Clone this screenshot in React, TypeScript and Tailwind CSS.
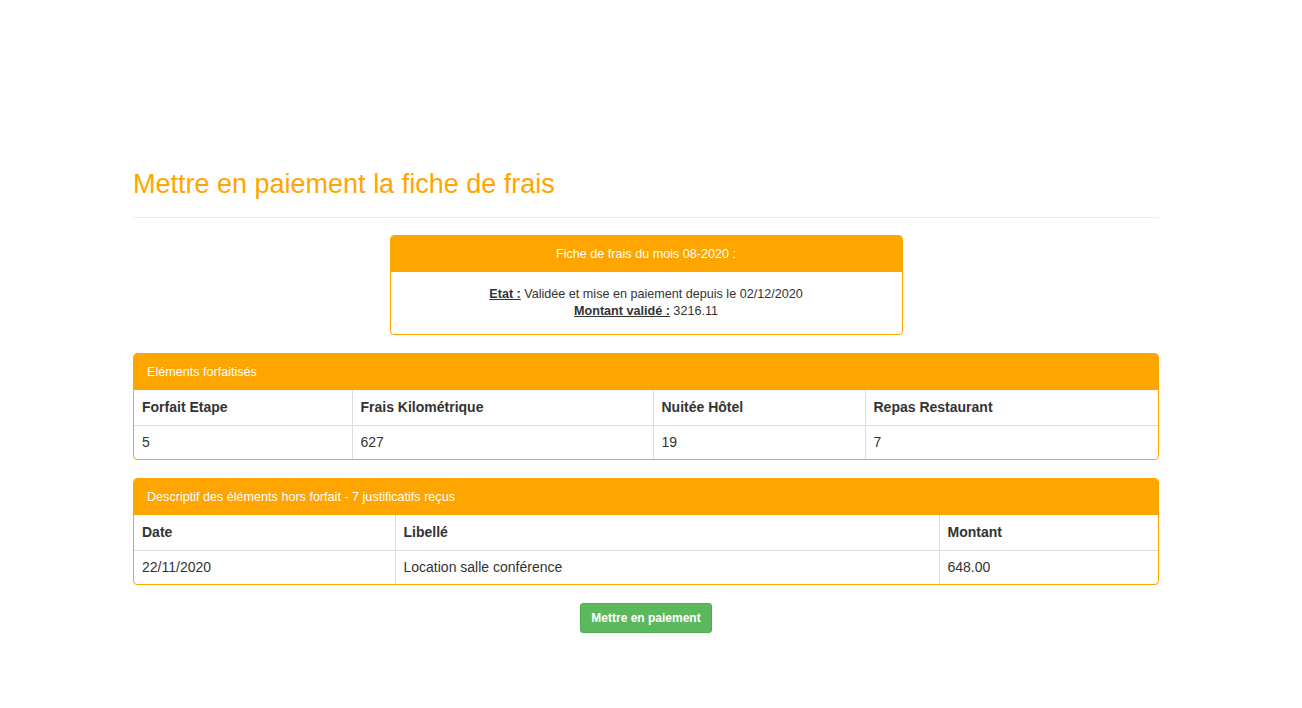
import { FC } from "react";

const Panel: FC<{ title: string; cols: { label: string; w: string }[]; row: string[] }> = ({ title, cols, row }) => {
    return (
        <div className="border border-[#ffa500] rounded-[4px] overflow-hidden mb-[18px]">
            <div className="bg-[#ffa500] text-white text-[12.6px] h-[36px] flex items-center px-[13px]">{title}</div>
            <table className="w-full border-collapse text-[14px] text-[#333]">
                <thead>
                    <tr className="h-[35px]">
                        {cols.map((c, i) => (
                            <th key={i} className={`${c.w} text-left font-bold px-[8px] border-b border-[#ddd] ${i > 0 ? "border-l" : ""}`}>{c.label}</th>
                        ))}
                    </tr>
                </thead>
                <tbody>
                    <tr className="h-[34px]">
                        {row.map((v, i) => (
                            <td key={i} className={`px-[8px] border-[#ddd] ${i > 0 ? "border-l" : ""}`}>{v}</td>
                        ))}
                    </tr>
                </tbody>
            </table>
        </div>
    );
};

export default function App() {
    return (
        <div className="min-h-[708px] bg-white font-['Liberation_Sans',Arial,sans-serif] text-[#333]">
            <div className="ml-[133px] w-[1026px] pt-[167px]">
                <h2 className="text-[27px] leading-[35px] text-[#ffa500]">Mettre en paiement la fiche de frais</h2>
                <hr className="mt-[15px] border-t border-[#eee]" />

                <div className="w-[513px] mx-auto mt-[17px] mb-[18px] border border-[#ffa500] rounded-[4px] overflow-hidden">
                    <div className="bg-[#ffa500] text-white text-[12.6px] h-[36px] flex items-center justify-center">Fiche de frais du mois 08-2020 :</div>
                    <div className="text-[12.6px] leading-[17px] text-center py-[14px]">
                        <div><span className="font-bold underline">Etat :</span> Validée et mise en paiement depuis le 02/12/2020</div>
                        <div><span className="font-bold underline">Montant validé :</span> 3216.11</div>
                    </div>
                </div>

                <Panel
                    title="Eléments forfaitisés"
                    cols={[
                        { label: "Forfait Etape", w: "w-[218px]" },
                        { label: "Frais Kilométrique", w: "w-[301px]" },
                        { label: "Nuitée Hôtel", w: "w-[212px]" },
                        { label: "Repas Restaurant", w: "" },
                    ]}
                    row={["5", "627", "19", "7"]}
                />

                <Panel
                    title="Descriptif des éléments hors forfait - 7 justificatifs reçus"
                    cols={[
                        { label: "Date", w: "w-[261px]" },
                        { label: "Libellé", w: "w-[544px]" },
                        { label: "Montant", w: "" },
                    ]}
                    row={["22/11/2020", "Location salle conférence", "648.00"]}
                />

                <div className="flex justify-center">
                    <button className="bg-[#5cb85c] border border-[#4cae4c] text-white text-[12px] font-bold leading-[18px] px-[10px] py-[5px] rounded-[3px]">Mettre en paiement</button>
                </div>
            </div>
        </div>
    );
}
